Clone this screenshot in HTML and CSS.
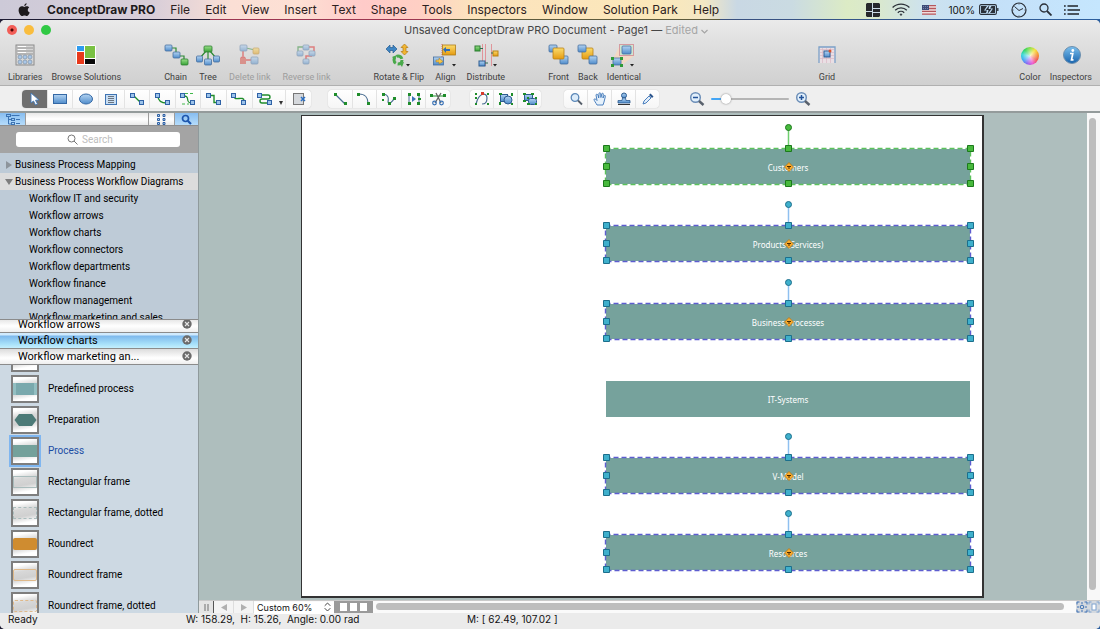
FILE: index.html
```html
<!DOCTYPE html>
<html lang="en">
<head>
<meta charset="utf-8">
<title>Unsaved ConceptDraw PRO Document - Page1</title>
<link rel="stylesheet" href="styles.css">
</head>
<body>
<svg class="defs" aria-hidden="true">
  <defs>
    <linearGradient id="g-blue" x1="0" y1="0" x2="0" y2="1"><stop offset="0" stop-color="#b4d4f2"/><stop offset="1" stop-color="#4f8ccb"/></linearGradient>
    <linearGradient id="g-green" x1="0" y1="0" x2="0" y2="1"><stop offset="0" stop-color="#9be08a"/><stop offset="1" stop-color="#37a136"/></linearGradient>
    <linearGradient id="g-gold" x1="0" y1="0" x2="0" y2="1"><stop offset="0" stop-color="#fbdc6c"/><stop offset="1" stop-color="#e59a10"/></linearGradient>
    <linearGradient id="g-info" x1="0" y1="0" x2="0" y2="1"><stop offset="0" stop-color="#7cc0ee"/><stop offset="1" stop-color="#1763ad"/></linearGradient>
    <symbol id="node" viewBox="0 0 5 5"><rect x=".5" y=".5" width="4" height="4" fill="#9cc3ea" stroke="#2f62a6"/></symbol>
    <symbol id="dot" viewBox="0 0 3 3"><rect width="3" height="3" fill="#1f8d2b"/></symbol>
    <symbol id="selection" viewBox="0 0 372 66">
      <rect x="3.500" y="25.500" width="365" height="36" fill="none" stroke="#fff"/>
      <rect x="3.500" y="25.500" width="365" height="36" fill="none" stroke="var(--line)" stroke-width="1.400" stroke-dasharray="5 3"/>
      <path d="M186.500 6v19" stroke="var(--stem)" stroke-width="1.500"/>
      <g fill="var(--handle)" stroke="var(--edge)">
        <circle cx="186.500" cy="4.500" r="3"/>
        <path d="M1.500 22.500h6v6h-6zM183.500 22.500h6v6h-6zM365.500 22.500h6v6h-6zM1.500 40.500h6v6h-6zM365.500 40.500h6v6h-6zM1.500 57.500h6v6h-6zM183.500 57.500h6v6h-6zM365.500 57.500h6v6h-6z"/>
      </g>
      <path d="M187 39.500l4.500 4.500-4.500 4.500-4.500-4.500z" fill="#f9ab2c" stroke="#b06d10" stroke-width=".7"/>
      <path d="M185 43.500h4M187 43.500v2.500" stroke="#4a2b00" stroke-width="1"/>
    </symbol>
    <symbol id="close" viewBox="0 0 10 10"><circle cx="5" cy="5" r="4.700" fill="#6b6b6b"/><path d="M3 3l4 4M7 3l-4 4" stroke="#e6e6e6" stroke-width="1.100"/></symbol>
  </defs>
</svg>

<header class="menubar">
  <nav class="menus">
    <button class="menu" aria-label="Apple"><svg width="12" height="14" viewBox="0 0 12 14"><path d="M8.600.3c.1 1.200-.9 2.600-2.300 2.800C6.100 1.800 7.300.5 8.600.3zM6.300 4c.6 0 1.300-.7 2.500-.7 1 0 1.900.5 2.400 1.300-2.100 1.300-1.700 4.200.5 5-.5 1.400-1.600 3.500-2.900 3.500-.9 0-1.200-.6-2.300-.6s-1.500.6-2.300.6C2.600 13.100.6 9.900.6 7.300c0-2.700 1.700-4 3.300-4C5 3.300 5.800 4 6.300 4z" fill="#1d1a1c"/></svg></button>
    <button class="menu app">ConceptDraw PRO</button>
    <button class="menu">File</button>
    <button class="menu">Edit</button>
    <button class="menu">View</button>
    <button class="menu">Insert</button>
    <button class="menu">Text</button>
    <button class="menu">Shape</button>
    <button class="menu">Tools</button>
    <button class="menu">Inspectors</button>
    <button class="menu">Window</button>
    <button class="menu">Solution Park</button>
    <button class="menu">Help</button>
  </nav>
  <div class="tray">
    <svg width="14" height="14" viewBox="0 0 14 14" fill="#26282c"><path d="M1 0h5v8H0V1zM0 9h6v5H1l-1-1zM7 0h6l1 1v4H7zM7 6h7v3H7zM7 10h7v3l-1 1H7z"/><path d="M6.500 0v14M0 8.500h6M7 5.500h7M7 9.500h7" stroke="#cbdbe6"/></svg>
    <svg width="18" height="13" viewBox="0 0 18 13" fill="none" stroke="#2b3038" stroke-width="1.300"><path d="M.6 4.500a12 12 0 0 1 16.800 0M3.200 7.200a8.300 8.300 0 0 1 11.600 0M5.800 9.700a4.600 4.600 0 0 1 6.400 0"/><circle cx="9" cy="11.600" r=".8" fill="#2b3038" stroke-width=".6"/></svg>
    <svg width="14" height="10" viewBox="0 0 14 10"><path fill="#f0dfdf" d="M0 0h14v10H0z"/><path d="M0 .7h14M0 3.500h14M0 6.300h14M0 9.200h14" stroke="#b4565c" stroke-width="1.300"/><path fill="#3c4a78" d="M0 0h7v5H0z"/><path d="M1 1.500h5M1 3.500h5" stroke="#9fa8c8" stroke-width=".6" stroke-dasharray="1 1"/></svg>
    <span class="battery">100%<svg width="20" height="11" viewBox="0 0 20 11"><rect x=".6" y=".6" width="16.800" height="9.800" rx="1.500" fill="none" stroke="#2b3038" stroke-width="1.100"/><path d="M2 2h6L5 6.500h3L7 9H2zM16 9h-5l3-4.500h-3L12.500 2H16z" fill="#2b3038"/><path d="M10.500 1L6.500 6h3L8.500 10l4-5h-3z" fill="#2b3038"/><path d="M18.800 4v3" stroke="#2b3038" stroke-width="1.300"/></svg></span>
    <svg width="16" height="16" viewBox="0 0 16 16" fill="none" stroke="#2b3038"><circle cx="8" cy="8" r="7" stroke-width="1.200"/><path d="M3.500 4.500L8 8.500l4-2"/><path d="M8 1.500v1M8 13.500v1M1.500 8h1M13.500 8h1" stroke-width=".8"/></svg>
    <svg width="13" height="13" viewBox="0 0 13 13" fill="none" stroke="#2b3038" stroke-width="1.300"><circle cx="5" cy="5" r="4"/><path d="M8 8l4.500 4.500" stroke-width="1.800"/></svg>
    <svg width="16" height="10" viewBox="0 0 16 10" stroke="#20242a" stroke-width="1.700"><path d="M3.500 1H14M3.500 5H16M3.500 9H15M0 1h1.700M0 5h1.700M0 9h1.700"/></svg>
  </div>
</header>

<div class="window">
  <div class="titlebar">
    <div class="lights">
      <button class="light red" aria-label="Close"></button>
      <button class="light yellow" aria-label="Minimize"></button>
      <button class="light green" aria-label="Zoom"></button>
    </div>
    <h1 class="title">Unsaved ConceptDraw PRO Document - Page1 — <span class="edited">Edited <svg width="7" height="5" viewBox="0 0 7 5"><path d="M.5 1l3 3 3-3" fill="none" stroke="#a5a5a5" stroke-width="1.200"/></svg></span></h1>
  </div>

  <div class="toolbar">
    <div class="tb-group">
      <button class="tb"><svg viewBox="0 0 26 24"><rect x="4" y="2" width="18" height="20" fill="#d6d6d6" stroke="#8c8c8c"/><path d="M5 5h16M5 8h16M5 11h16" stroke="#929292"/><path d="M6 3.500h8M6 6.500h8M6 9.500h8" stroke="#fff"/><g fill="#a9c7e8" stroke="#8193a6" stroke-width=".7"><circle cx="8" cy="14" r="2"/><circle cx="13" cy="14" r="2"/><circle cx="18" cy="14" r="2"/><circle cx="8" cy="19" r="2"/><circle cx="13" cy="19" r="2"/><circle cx="18" cy="19" r="2"/></g></svg>Libraries</button>
      <button class="tb"><svg viewBox="0 0 26 24"><rect x="3" y="2" width="20" height="20" rx="2" fill="#fff"/><path fill="#2f9bee" d="M4 3h7v5H4z"/><path fill="#e8391b" d="M4 9h7v12H4z"/><path fill="#79c143" d="M12 3h10v12H12z"/><path fill="#0a0a0a" d="M12 16h10v5H12z"/></svg>Browse Solutions</button>
    </div>
    <div class="tb-group wide">
      <button class="tb"><svg viewBox="0 0 26 24"><path d="M8 5h5v5M16 13h5v5" fill="none" stroke="#2d8a35" stroke-width="1.200"/><g stroke="#466f9e" stroke-width=".8" fill="url(#g-blue)"><rect x="2" y="2" width="7" height="6" rx="1"/><rect x="10" y="9" width="7" height="6" rx="1"/></g><rect x="18" y="16" width="7" height="6" rx="1" fill="url(#g-green)" stroke="#2e7f32" stroke-width=".8"/></svg>Chain</button>
      <button class="tb"><svg viewBox="0 0 26 24"><path d="M13 8v8M11 8l-6 7M15 8l6 7" fill="none" stroke="#2d8a35" stroke-width="1.200"/><rect x="9" y="3" width="8" height="6" rx="1" fill="url(#g-green)" stroke="#2e7f32" stroke-width=".8"/><g stroke="#466f9e" stroke-width=".8" fill="url(#g-blue)"><rect x="1.500" y="13" width="6" height="6" rx="1"/><rect x="9.500" y="16" width="7" height="6" rx="1"/><rect x="18.500" y="13" width="6" height="6" rx="1"/></g></svg>Tree</button>
      <button class="tb" disabled><svg viewBox="0 0 26 24"><path d="M9 5l9 2" stroke="#2d8a35" stroke-width="1.200"/><path d="M6 8v9h12M4 14l4 6M8 14l-4 6" stroke="#d22" fill="none" stroke-width="1.500"/><g stroke="#466f9e" stroke-width=".8" fill="url(#g-blue)"><rect x="3" y="2" width="7" height="6" rx="1"/><rect x="14" y="14" width="7" height="7" rx="1"/></g><rect x="16" y="5" width="6" height="6" rx="1" fill="url(#g-gold)" stroke="#b98214" stroke-width=".8"/><path fill="#d94c40" d="M3 15h6v6H3z"/></svg>Delete link</button>
      <button class="tb" disabled><svg viewBox="0 0 26 24"><path d="M5 10V4h7" stroke="#2d8a35" fill="none" stroke-width="1.300"/><path d="M16 4h5v5M19 13h-6v4" stroke="#d22" fill="none" stroke-width="1.500"/><g stroke="#466f9e" stroke-width=".8" fill="url(#g-blue)"><rect x="10" y="2" width="6" height="5" rx="1"/><rect x="4" y="8" width="6" height="5" rx="1"/><rect x="16" y="8" width="6" height="5" rx="1"/><rect x="10" y="16" width="6" height="5" rx="1"/></g></svg>Reverse link</button>
    </div>
    <div class="tb-group mid">
      <button class="tb"><svg viewBox="0 0 26 24"><path d="M0 6l4-4v2.500h3V2l4 4-4 4V7.500H4V10z" fill="#3f86c4" stroke="#255c92" stroke-width=".7"/><path d="M18.500 1L22 4.500h-2v4h2L18.500 12 15 8.500h2v-4h-2z" fill="#f2b632" stroke="#b17b13" stroke-width=".7"/><circle cx="12" cy="17" r="4" fill="none" stroke="#49a94a" stroke-width="3" stroke-dasharray="6.500 1.900"/><path d="M6 14l5-2-2 5zM18 19l-2 5-3-4z" fill="#49a94a"/><path d="M20 21h4l-2 2.500z" fill="#222"/></svg>Rotate &amp; Flip</button>
      <button class="tb"><svg viewBox="0 0 26 24"><path d="M10 1v22" stroke="#e0666c" stroke-dasharray="1 1"/><rect x="10.500" y="2" width="13" height="10" fill="url(#g-gold)" stroke="#ae7d1a" stroke-width=".8"/><rect x="1.500" y="14" width="10" height="8" fill="url(#g-blue)" stroke="#466f9e" stroke-width=".8"/><path d="M18 8h-4v2l-3-3.500L14 4v2h4z" fill="#2f6db5"/><path d="M4 17h3v-2l4 3.500L7 21v-2H4z" fill="#f6c64a" stroke="#a9781c" stroke-width=".5"/><path d="M20 21h4l-2 2.500z" fill="#222"/></svg>Align</button>
      <button class="tb"><svg viewBox="0 0 26 24"><path d="M9.500 1v22M12.500 1v22M18.500 1v22" stroke="#e0959a"/><rect x="2" y="3" width="5" height="5" fill="url(#g-green)" stroke="#2e7f32"/><rect x="6" y="18" width="6" height="5" fill="url(#g-blue)" stroke="#2d5c91"/><rect x="20" y="8" width="5" height="5" fill="url(#g-gold)" stroke="#b98214"/><path d="M7 5.500h3M12 20h3M18 10h2" stroke="#2e6c50"/><path d="M20 21h4l-2 2.500z" fill="#222"/></svg>Distribute</button>
    </div>
    <div class="tb-group">
      <button class="tb"><svg viewBox="0 0 26 24"><g stroke="#466f9e" stroke-width=".8" fill="url(#g-blue)"><rect x="3" y="2" width="8" height="7" rx="1"/><rect x="14" y="13" width="8" height="8" rx="1"/></g><rect x="7" y="5" width="11" height="11" rx="1" fill="url(#g-gold)" stroke="#b98214" stroke-width=".8"/></svg>Front</button>
      <button class="tb"><svg viewBox="0 0 26 24"><rect x="7" y="5" width="11" height="11" rx="1" fill="url(#g-gold)" stroke="#b98214" stroke-width=".8"/><g stroke="#466f9e" stroke-width=".8" fill="url(#g-blue)"><rect x="3" y="2" width="8" height="7" rx="1"/><rect x="14" y="13" width="8" height="8" rx="1"/></g></svg>Back</button>
      <button class="tb"><svg viewBox="0 0 26 24"><path d="M9 2L2 16l9 6 13-10z" fill="#f3d9c4"/><rect x="8.500" y="1.500" width="14" height="11" fill="#cfe6d2" stroke="#d59aa0"/><rect x="11" y="3" width="9" height="8" rx="1" fill="url(#g-blue)" stroke="#466f9e" stroke-width=".8"/><rect x="2" y="15" width="8" height="7" rx="1" fill="url(#g-blue)" stroke="#466f9e" stroke-width=".8"/><path d="M0 14h3v3H0zM9 14h3v3H9zM0 21h3v3H0zM9 21h3v3H9z" fill="#2f9a38"/><path d="M19 21h4l-2 2.500z" fill="#222"/></svg>Identical</button>
    </div>
    <div class="tb-group view">
      <button class="tb"><svg viewBox="0 0 26 24"><path d="M5 20V4h16v16" fill="#e9dfe4" stroke="#7ba0c8" stroke-width="1.300"/><path d="M6 6.500h14M6 9.500h14M6 12.500h14M6 15.500h14M8.500 5v15M12.500 5v15M16.500 5v15" stroke="#dbb9c4" stroke-width=".7"/><rect x="10" y="8" width="6" height="6" fill="url(#g-blue)" stroke="#315f95"/><circle cx="16" cy="8" r="1.500" fill="#d9532c"/></svg>Grid</button>
    </div>
    <div class="tb-group end">
      <button class="tb"><span class="wheel"></span>Color</button>
      <button class="tb"><svg viewBox="0 0 26 24"><circle cx="14" cy="12" r="8.500" fill="url(#g-info)" stroke="#6d8fae"/><circle cx="14.800" cy="7.500" r="1.400" fill="#fff"/><path d="M12 10.500h2.800l-1.300 6.300h2" fill="none" stroke="#fff" stroke-width="1.700"/></svg>Inspectors</button>
    </div>
  </div>

  <div class="tools">
    <div class="seg connectors">
      <button class="tool on" aria-label="Select"><svg viewBox="0 0 16 14"><path d="M5 1v10l2.500-2 2 4 2-1-2-3.800L13 8z" fill="#fff" stroke="#3e77b8" stroke-width=".9"/></svg></button>
      <button class="tool" aria-label="Rectangle"><svg viewBox="0 0 16 14"><rect x="1.500" y="2.500" width="13" height="9" fill="url(#g-blue)" stroke="#3468a5"/></svg></button>
      <button class="tool" aria-label="Ellipse"><svg viewBox="0 0 16 14"><ellipse cx="8" cy="7" rx="6.500" ry="5" fill="url(#g-blue)" stroke="#3468a5"/></svg></button>
      <button class="tool" aria-label="Text box"><svg viewBox="0 0 16 14"><rect x="2.500" y="2.500" width="11" height="10" fill="#c8def3" stroke="#3f74b3"/><path d="M5 4.500h6M5 6.500h6M5 8.500h6M5 10.500h6" stroke="#6a7480"/></svg></button>
      <button class="tool" aria-label="Straight connector"><svg viewBox="0 0 16 14"><path d="M4 3l8 8" stroke="#1f8d2b" stroke-width="1.300"/><use href="#node" x="1" y="1" width="5" height="5"/><use href="#node" x="10" y="8" width="5" height="5"/></svg></button>
      <button class="tool" aria-label="Arc connector"><svg viewBox="0 0 16 14"><path d="M3 4c0 5 4 7 9 7" fill="none" stroke="#1f8d2b" stroke-width="1.300"/><use href="#node" x="0" y="1" width="5" height="5"/><use href="#node" x="10" y="8" width="5" height="5"/></svg></button>
      <button class="tool" aria-label="Bezier connector"><svg viewBox="0 0 16 14"><path d="M4 4c7 0 0 7 8 7" fill="none" stroke="#1f8d2b" stroke-width="1.300"/><path d="M5 1.500h8M2 12h7" stroke="#40b84a" stroke-dasharray="3 2"/><use href="#node" x="0" y="1" width="5" height="5"/><use href="#node" x="10" y="8" width="5" height="5"/></svg></button>
      <button class="tool" aria-label="Smart connector"><svg viewBox="0 0 16 14"><path d="M4 3.500h4v7h4" fill="none" stroke="#1f8d2b" stroke-width="1.400"/><use href="#node" x="0" y="1" width="5" height="5"/><use href="#node" x="10" y="8" width="5" height="5"/></svg></button>
      <button class="tool" aria-label="Curve connector"><svg viewBox="0 0 16 14"><path d="M3 4c0 6 10-1 10 5" fill="none" stroke="#1f8d2b" stroke-width="1.400"/><use href="#node" x="0" y="1" width="5" height="5"/><use href="#node" x="10" y="8" width="5" height="5"/></svg></button>
      <button class="tool" aria-label="Round connector"><svg viewBox="0 0 16 14"><path d="M4 3h7q2 0 2 2t-2 2H5q-2 0-2 2t2 2h6" fill="none" stroke="#1f8d2b" stroke-width="1.400"/><use href="#node" x="0" y="1" width="5" height="5"/><use href="#node" x="10" y="8" width="5" height="5"/></svg></button>
      <button class="tool drop" aria-label="More connectors"><svg viewBox="0 0 6 14"><path d="M1 9h4l-2 4z" fill="#333"/></svg></button>
      <button class="tool" aria-label="Remove shape"><svg viewBox="0 0 16 14"><rect x="2.500" y="1.500" width="10" height="11" fill="#d5d8dc" stroke="#777"/><path d="M10 5l4 4M14 5l-4 4" stroke="#2b6fc2" stroke-width="1.500"/></svg></button>
    </div>
    <div class="seg lines">
      <button class="tool" aria-label="Line"><svg viewBox="0 0 16 14"><path d="M3 2l10 10" stroke="#4b6f92" stroke-width="1.200"/><use href="#dot" x="2" y="1" width="3" height="3"/><use href="#dot" x="12" y="10" width="3" height="3"/></svg></button>
      <button class="tool" aria-label="Arc"><svg viewBox="0 0 16 14"><path d="M3 2c6 0 9 4 9 9" fill="none" stroke="#4b6f92" stroke-width="1.200"/><use href="#dot" x="1" y="1" width="3" height="3"/><use href="#dot" x="11" y="10" width="3" height="3"/></svg></button>
      <button class="tool" aria-label="Bezier"><svg viewBox="0 0 16 14"><path d="M3 2c8 2 2 9 5 9s3-2 5-4" fill="none" stroke="#4b6f92" stroke-width="1.200"/><use href="#dot" x="1" y="1" width="3" height="3"/><use href="#dot" x="7" y="10" width="3" height="3"/><use href="#dot" x="12" y="5" width="3" height="3"/><use href="#dot" x="1" y="7" width="2" height="2"/></svg></button>
      <button class="tool" aria-label="Break point"><svg viewBox="0 0 16 14"><path d="M3 2v10M13 2v10" stroke="#4b6f92"/><path d="M6 4l4 3-4 3z" fill="#3b74b8"/><path d="M2 1h3v3H2zM11 1h3v3h-3zM2 10h3v3H2zM11 10h3v3h-3zM12 6h3v2h-3z" fill="#1f8d2b"/></svg></button>
      <button class="tool" aria-label="Cut"><svg viewBox="0 0 16 14"><path d="M1 4h14" stroke="#1f8d2b"/><path d="M5 11l6-10M11 11L6 1" stroke="#666" stroke-width="1.300"/><circle cx="4.500" cy="11" r="1.800" fill="none" stroke="#356fb4" stroke-width="1.200"/><circle cx="11.500" cy="11" r="1.800" fill="none" stroke="#356fb4" stroke-width="1.200"/><path d="M0 2h3v3H0zM13 2h3v3h-3z" fill="#1f8d2b"/></svg></button>
    </div>
    <div class="seg groups">
      <button class="tool" aria-label="Edit points"><svg viewBox="0 0 16 14"><path d="M2 12C5 0 13 0 13 6s-3 6-5 6" fill="none" stroke="#4b6f92" stroke-width="1.200"/><path d="M1 1h2v2H1zM13 1h2v2h-2zM1 11h2v2H1zM13 11h2v2h-2zM1 5h2v2H1z" fill="#1f8d2b"/><path d="M7 0h3v3H7z" fill="#d83a2b"/></svg></button>
      <button class="tool" aria-label="Group"><svg viewBox="0 0 16 14"><rect x="2.500" y="2.500" width="7" height="7" fill="url(#g-blue)" stroke="#2d5c91"/><circle cx="10" cy="8" r="4" fill="url(#g-blue)" stroke="#2d5c91"/><path d="M1 1h3v2H1zM13 1h2v3h-2zM1 10h2v3H1zM13 11h2v2h-2z" fill="#1f8d2b"/></svg></button>
      <button class="tool" aria-label="Ungroup"><svg viewBox="0 0 16 14"><rect x="2.500" y="2.500" width="8" height="6" fill="url(#g-blue)" stroke="#2d5c91"/><rect x="6.500" y="6.500" width="8" height="6" rx="2" fill="url(#g-blue)" stroke="#2d5c91"/><path d="M1 1h3v2H1zM9 1h3v2H9zM1 8h3v2H1zM5 11h3v2H5zM13 11h2v2h-2zM13 5h2v2h-2zM5 5h2v2H5z" fill="#1f8d2b"/></svg></button>
    </div>
    <div class="seg view-tools">
      <button class="tool" aria-label="Zoom tool"><svg viewBox="0 0 16 14"><circle cx="7" cy="5.500" r="3.800" fill="#dcecfa" stroke="#5c88b8" stroke-width="1.300"/><path d="M10 8.500l4 4" stroke="#555e6a" stroke-width="1.800"/></svg></button>
      <button class="tool" aria-label="Hand"><svg viewBox="0 0 16 14"><path d="M5 13C4 11 2 8.500 2 7.500S4 7 5 8.500L4 3c0-1 1.500-1 2 0l.7 3L7 1.500c0-1 1.500-1 1.700 0l.2 4 .9-3.600c.3-1 1.600-.8 1.500.2L11 6l1-2c.5-1 1.700-.6 1.400.4L12 10l-1 3z" fill="#e6f1fb" stroke="#3b74b8" stroke-width=".9"/></svg></button>
      <button class="tool" aria-label="Stamp"><svg viewBox="0 0 16 14"><circle cx="8" cy="3.500" r="2.500" fill="url(#g-blue)" stroke="#2d5c91"/><path d="M6.500 6h3l.5 2.500h4v2.500H2V8.500h4z" fill="url(#g-blue)" stroke="#2d5c91" stroke-width=".8"/><path d="M2 12.500h12" stroke="#333"/></svg></button>
      <button class="tool" aria-label="Eyedropper"><svg viewBox="0 0 16 14"><path d="M3 12l1-3 5-5 2 2-5 5z" fill="#e2eefa" stroke="#3b74b8" stroke-width=".9"/><path d="M9 3l1.500-1.500L13.500 4.500 12 6z" fill="#29528a"/></svg></button>
    </div>
    <div class="zoom">
      <button class="zoom-btn" aria-label="Zoom out"><svg viewBox="0 0 16 16"><circle cx="6.500" cy="6.500" r="4.800" fill="#e1effb" stroke="#6d8fb8" stroke-width="1.500"/><path d="M4 6.500h5" stroke="#24549a" stroke-width="1.500"/><path d="M10 10l4.500 4" stroke="#59616c" stroke-width="2.400"/></svg></button>
      <input class="slider" type="range" min="0" max="100" value="14" aria-label="Zoom">
      <button class="zoom-btn" aria-label="Zoom in"><svg viewBox="0 0 16 16"><circle cx="6.500" cy="6.500" r="4.800" fill="#e1effb" stroke="#6d8fb8" stroke-width="1.500"/><path d="M4 6.500h5M6.500 4v5" stroke="#24549a" stroke-width="1.500"/><path d="M10 10l4.500 4" stroke="#59616c" stroke-width="2.400"/></svg></button>
    </div>
  </div>

  <main class="body">
    <aside class="sidebar">
      <div class="side-tabs">
        <button class="side-tab on" aria-label="Library tree"><svg width="14" height="11" viewBox="0 0 14 11" fill="none" stroke="#3c74b4"><rect x=".5" y=".5" width="4" height="2"/><path d="M5.500 1.500h8M2.500 3v7h3M2.500 5.500h3M10 5.500h4M10 9.500h4"/><rect x="5.500" y="4.500" width="3" height="2"/><rect x="5.500" y="8.500" width="3" height="2"/></svg></button>
        <span class="side-fill"></span>
        <button class="side-tab grid-tab" aria-label="Grid view"><svg width="9" height="11" viewBox="0 0 9 11" fill="#b9d3ef" stroke="#2c5fa3"><path d="M.5.500h2v2h-2zM6 .5h2v2H6zM.5 4.500h2v2h-2zM6 4.500h2v2H6zM.5 8.500h2v2h-2zM6 8.500h2v2H6z"/></svg></button>
        <button class="side-tab on" aria-label="Search view"><svg width="11" height="11" viewBox="0 0 11 11" fill="none" stroke="#1d56ae"><circle cx="4.500" cy="4.500" r="3" stroke-width="1.700"/><path d="M7 7l3 3" stroke-width="2.200"/></svg></button>
      </div>
      <div class="search-panel">
        <label class="search"><svg width="11" height="11" viewBox="0 0 11 11" fill="none" stroke="#777"><circle cx="4.500" cy="4.500" r="3.500"/><path d="M7 7l3.500 3.500"/></svg><input type="text" placeholder="Search" aria-label="Search libraries"></label>
      </div>
      <ul class="tree">
        <li><button class="branch"><svg width="8" height="8" viewBox="0 0 8 8"><path d="M1 0l6 4-6 4z" fill="#8d949b"/></svg>Business Process Mapping</button></li>
        <li><button class="branch open"><svg width="8" height="8" viewBox="0 0 8 8"><path d="M0 1h8L4 7z" fill="#7d7d7d"/></svg>Business Process Workflow Diagrams</button></li>
        <li><button class="leaf">Workflow IT and security</button></li>
        <li><button class="leaf">Workflow arrows</button></li>
        <li><button class="leaf">Workflow charts</button></li>
        <li><button class="leaf">Workflow connectors</button></li>
        <li><button class="leaf">Workflow departments</button></li>
        <li><button class="leaf">Workflow finance</button></li>
        <li><button class="leaf">Workflow management</button></li>
        <li><button class="leaf">Workflow marketing and sales</button></li>
      </ul>
      <ul class="open-libs">
        <li class="lib">Workflow arrows<button class="close" aria-label="Close Workflow arrows"><svg><use href="#close"/></svg></button></li>
        <li class="lib on">Workflow charts<button class="close" aria-label="Close Workflow charts"><svg><use href="#close"/></svg></button></li>
        <li class="lib">Workflow marketing an...<button class="close" aria-label="Close Workflow marketing"><svg><use href="#close"/></svg></button></li>
      </ul>
      <div class="shape-panel">
        <ul class="shapes">
          <li><button class="item" aria-label="Previous shape"><span class="thumb"><i class="pic"></i></span></button></li>
          <li><button class="item"><span class="thumb"><i class="pic predefined"></i></span>Predefined process</button></li>
          <li><button class="item"><span class="thumb"><svg width="23" height="12" viewBox="0 0 23 12"><path d="M5 0h13l4.500 6L18 12H5L.5 6z" fill="#4c7a77"/></svg></span>Preparation</button></li>
          <li><button class="item on"><span class="thumb"><i class="pic process"></i></span>Process</button></li>
          <li><button class="item"><span class="thumb"><i class="pic frame"></i></span>Rectangular frame</button></li>
          <li><button class="item"><span class="thumb"><i class="pic frame dotted"></i></span>Rectangular frame, dotted</button></li>
          <li><button class="item"><span class="thumb"><i class="pic round"></i></span>Roundrect</button></li>
          <li><button class="item"><span class="thumb"><i class="pic frame orange"></i></span>Roundrect frame</button></li>
          <li><button class="item"><span class="thumb"><i class="pic frame orange dotted"></i></span>Roundrect frame, dotted</button></li>
        </ul>
      </div>
    </aside>

    <section class="editor">
      <div class="work">
        <div class="canvas">
          <div class="page">
            <div class="shape s1 primary">Customers<svg class="sel"><use href="#selection"/></svg></div>
            <div class="shape s2">Products (Services)<svg class="sel"><use href="#selection"/></svg></div>
            <div class="shape s3">Business Processes<svg class="sel"><use href="#selection"/></svg></div>
            <div class="shape s4">IT-Systems</div>
            <div class="shape s5">V-Model<svg class="sel"><use href="#selection"/></svg></div>
            <div class="shape s6">Resources<svg class="sel"><use href="#selection"/></svg></div>
          </div>
        </div>
        <div class="vscroll"><span class="bar"></span></div>
      </div>
      <div class="pagebar">
        <button class="pb split" aria-label="Split"><svg width="5" height="7" viewBox="0 0 5 7"><path d="M1 0v7M4 0v7" stroke="#8a8a8a" stroke-width="1.300"/></svg></button>
        <button class="pb nav" aria-label="Previous page"><svg width="6" height="7" viewBox="0 0 6 7"><path d="M6 0v7L0 3.500z" fill="#b0b0b0"/></svg></button>
        <button class="pb nav" aria-label="Next page"><svg width="6" height="7" viewBox="0 0 6 7"><path d="M0 0v7l6-3.500z" fill="#b0b0b0"/></svg></button>
        <div class="scale">
          <select aria-label="Page scale"><option>Custom 60%</option></select>
          <svg class="updown" width="7" height="10" viewBox="0 0 7 10" fill="none" stroke="#444"><path d="M.7 3.800L3.500 1l2.800 2.800M.7 6.200L3.500 9l2.800-2.800"/></svg>
        </div>
        <button class="pb pages" aria-label="Pages"><i></i><i></i><i></i></button>
        <div class="hscroll"><span class="bar"></span></div>
        <button class="pb fit" aria-label="Fit all"><svg width="12" height="12" viewBox="0 0 12 12" fill="none" stroke="#3a6fb4"><circle cx="6" cy="6" r="1.800"/><path d="M1 3.500V1h2.500M8.500 1H11v2.500M11 8.500V11H8.500M3.500 11H1V8.500M6 1v2M6 9v2M1 6h2M9 6h2"/></svg></button>
        <button class="pb fit" aria-label="Fit page"><svg width="12" height="12" viewBox="0 0 12 12" fill="none" stroke="#7fa3cf"><rect x="4" y="3" width="4" height="6" fill="#fff"/><path d="M1 3.500V1h2.500M8.500 1H11v2.500M11 8.500V11H8.500M3.500 11H1V8.500"/></svg></button>
      </div>
    </section>
  </main>

  <footer class="status">
    <span class="ready">Ready</span>
    <span class="dims">W: 158.29,&nbsp; H: 15.26,&nbsp; Angle: 0.00 rad</span>
    <span>M: [ 62.49, 107.02 ]</span>
  </footer>
</div>
</body>
</html>
```
FILE: styles.css
```css
* { box-sizing: border-box; }
html, body { height: 100%; }
body {
  margin: 0;
  display: flex;
  flex-direction: column;
  overflow: hidden;
  background: linear-gradient(90deg, #1d1b33 0 210px, #9c3550 210px 440px, #5c5a3c 440px 720px, #39507e 720px, #2c5f9e);
  font-family: Inter, "Liberation Sans", sans-serif;
  font-size: 10px;
  color: #111;
}
button, input, select { font: inherit; color: inherit; }
button { border: 0; background: none; padding: 0; margin: 0; }
ul { list-style: none; margin: 0; padding: 0; }
svg { display: block; flex: none; }
.defs { position: absolute; width: 0; height: 0; }

/* System menu bar */
.menubar {
  height: 19px;
  flex: none;
  display: flex;
  justify-content: space-between;
  align-items: center;
  padding: 0 20px 0 18px;
  background: linear-gradient(90deg, #cdcad8 0%, #d8ced9 14%, #fbdfd5 21%, #fde0d4 27%, #ffcbc9 33%, #ffcfc4 38%, #fce3bd 43%, #fbe8ba 60%, #f3e7c4 64%, #c9d8e4 67%, #cadbe2 72%, #dcebc5 77%, #d9e8cf 80%, #cde2ee 84%, #c4e0f8 90%, #c5e6fe 100%);
  font-size: 12px;
}
.menus { display: flex; align-items: center; gap: 15px; }
.menu { white-space: nowrap; color: #2b2020; }
.app { font-weight: 700; color: #1d1a1c; margin-left: 2px; }
.tray { display: flex; align-items: center; gap: 12px; font-size: 10px; }
.battery { display: flex; align-items: center; gap: 4px; }

/* Window */
.window {
  flex: 1;
  min-height: 0;
  margin-top: 1px;
  display: flex;
  flex-direction: column;
  border-radius: 5px;
  overflow: hidden;
  background: #ebebeb;
}
.titlebar {
  flex: none;
  height: 20px;
  display: flex;
  align-items: center;
  padding: 0 45px 0 7px;
  background: linear-gradient(#ebebeb, #e1e1e1);
}
.lights { width: 50px; display: flex; gap: 7px; }
.light { width: 10px; height: 10px; border-radius: 50%; }
.red { background: radial-gradient(#4c0502 0 1px, #f25e57 2px); }
.yellow { background: #f9bd3e; }
.green { background: #30c944; }
.title { flex: 1; margin: 0; text-align: center; font-weight: 400; font-size: 11px; color: #464646; white-space: nowrap; }
.edited { color: #a5a5a5; }
.edited svg { display: inline-block; }

.toolbar {
  flex: none;
  height: 46px;
  display: flex;
  gap: 43px;
  padding: 3px 8px 0;
  border-bottom: 1px solid #b0b0b0;
  background: linear-gradient(#e1e1e1, #d0d0d0);
  font-family: Roboto, "Liberation Sans", sans-serif;
}
.tb-group { display: flex; gap: 9px; }
.tb-group.wide { gap: 12px; }
.tb-group.mid { gap: 11px; }
.tb-group.view { margin-left: 134px; }
.tb-group.end { margin-left: auto; }
.tb {
  display: flex;
  flex-direction: column;
  align-items: center;
  gap: 4px;
  font-size: 9px;
  line-height: 12px;
  color: #404040;
  white-space: nowrap;
}
.tb svg { width: 26px; height: 24px; margin: 0 -4px; }
.tb:disabled { color: #9d9d9d; }
.tb:disabled svg { opacity: .5; }
.wheel {
  width: 18px;
  height: 18px;
  margin: 4px 0 2px;
  border-radius: 50%;
  background: radial-gradient(#fffc, #fff0 65%), conic-gradient(#8be04a, #f7e13a, #f59331, #f2564f, #ee58d2, #8f63f0, #3aa6f5, #33d6d6, #2fd45b, #8be04a);
}

.tools {
  flex: none;
  height: 27px;
  display: flex;
  align-items: center;
  padding: 0 22px;
  background: #efefef;
  border-bottom: 2px solid #949b9b;
}
.seg {
  display: flex;
  height: 18px;
  border-radius: 4px;
  background: linear-gradient(#fff, #f6f6f6);
  box-shadow: 0 0 1px #a8a8a8;
  overflow: hidden;
}
.connectors { width: 289px; }
.lines { width: 122px; margin-left: 17px; }
.groups { width: 71px; margin-left: 20px; }
.view-tools { width: 95px; margin-left: 23px; }
.tool { flex: 1; display: grid; place-items: center; border-left: 1px solid #e3e3e3; }
.tool:first-child { border-left: 0; }
.tool svg { width: 16px; height: 14px; }
.tool.on { background: #6f6f6f; }
.tool.drop { flex: 0 0 8px; border: 0; }
.tool.drop svg { width: 6px; }
.zoom { display: flex; align-items: center; gap: 6px; margin-left: 30px; }
.zoom-btn svg { width: 16px; height: 16px; }
.slider { appearance: none; width: 78px; height: 12px; margin: 0; background: none; }
.slider::-webkit-slider-runnable-track { height: 2px; border-radius: 1px; background: linear-gradient(90deg, #43a5f5 12px, #b5b5b5 12px); }
.slider::-webkit-slider-thumb { appearance: none; width: 10px; height: 10px; margin-top: -4px; border-radius: 50%; background: #fff; box-shadow: 0 0 2px #777; }

/* Sidebar */
.body { flex: 1; min-height: 0; display: flex; }
.sidebar {
  width: 199px;
  flex: none;
  display: flex;
  flex-direction: column;
  border-right: 1px solid #8f9a9c;
  background: #cdd9e3;
  font-family: Roboto, "Liberation Sans", sans-serif;
  color: #000;
}
.side-tabs { flex: none; height: 13px; display: flex; border-bottom: 1px solid #8e8e8e; background: linear-gradient(#e8e8e8, #fff 50%, #e9e9e9); }
.side-tab { width: 24px; display: grid; place-items: center; border-left: 1px solid #9c9c9c; }
.side-tab:first-child { width: 26px; border-left: 0; border-right: 1px solid #9c9c9c; }
.side-tab.grid-tab { width: 26px; }
.side-tab.on { background: linear-gradient(#87bdf0, #b5dcfb); }
.side-fill { flex: 1; }
.search-panel { flex: none; height: 27px; padding: 6px 18px 6px 16px; background: #a4a4a4; }
.search { display: flex; align-items: center; gap: 4px; height: 15px; padding-left: 51px; border-radius: 3px; background: #fff; }
.search input { width: 90px; min-width: 0; border: 0; padding: 0; background: none; outline: 0; }
.search input::placeholder { color: #bdbdbd; }
.tree { flex: none; height: 166px; padding-top: 3px; overflow: hidden; background: #becbd7; }
.branch, .leaf { display: flex; align-items: center; width: 100%; height: 17px; white-space: nowrap; }
.branch { gap: 2px; padding-left: 5px; }
.branch.open { background: #dcdcdc; }
.leaf { padding-left: 29px; }
.open-libs { flex: none; height: 46px; display: flex; flex-direction: column; justify-content: flex-end; overflow: hidden; border-top: 1px solid #8b8b8b; }
.lib {
  flex: none;
  height: 16px;
  display: flex;
  align-items: center;
  justify-content: space-between;
  padding: 0 6px 1px 18px;
  border-bottom: 1px solid #8b8b8b;
  background: linear-gradient(#dcdcdc, #fff 60%, #eee);
  font-size: 11px;
}
.lib.on { background: linear-gradient(#d0eafd 0 2px, #7db8ec 3px, #a9e2fa 75%, #c4effd); }
.close svg { width: 10px; height: 10px; }
.shape-panel { flex: 1; min-height: 0; overflow: hidden; }
.shapes { margin-top: -23px; }
.item { display: flex; align-items: center; gap: 9px; width: 100%; height: 31px; padding-left: 11px; white-space: nowrap; }
.thumb {
  width: 28px;
  height: 28px;
  display: grid;
  place-items: center;
  border: 2px solid #7e7e7e;
  background: linear-gradient(170deg, #fff 0 12%, #d8d8d8 35%, #d0d0d0 60%, #fff 85%);
}
.pic { width: 24px; height: 12px; }
.predefined { background: #7aa9ad; border: solid #93bfc2; border-width: 0 3px; }
.process { background: #74a19b; }
.frame { border: 1px solid #a9bcbc; }
.round { background: #cf8c30; border-radius: 2px; }
.orange { border-color: #dfb98a; border-radius: 2px; }
.dotted { border-style: dashed; }
.item.on { color: #1c4da3; }
.item.on .thumb { box-shadow: 0 0 0 2px #7fb6f0; }

/* Document area */
.editor { flex: 1; min-width: 0; display: flex; flex-direction: column; }
.work { flex: 1; min-height: 0; display: flex; }
.canvas { flex: 1; min-width: 0; padding: 2px 103px 2px 102px; background: #aebebd; }
.page { position: relative; height: 100%; background: #fff; border: solid #333; border-width: 1px 2px 2px 1px; }
.shape {
  --line: #5d5dd0;
  --stem: #8fc0f0;
  --handle: #3fb0cc;
  --edge: #1c6f8c;
  position: absolute;
  left: 304px;
  width: 364px;
  height: 36px;
  display: grid;
  place-items: center;
  background: #76a29c;
  color: #fff;
  font: 8px "Noto Sans", "DejaVu Sans", sans-serif;
}
.primary { --line: #5cc25c; --stem: #6fce6f; --handle: #48b93d; --edge: #1c7a1c; }
.s1 { top: 33px; }
.s2 { top: 110px; }
.s3 { top: 188px; }
.s4 { top: 265px; }
.s5 { top: 342px; }
.s6 { top: 419px; }
.sel { position: absolute; left: -4px; top: -26px; width: 372px; height: 66px; }
.vscroll { width: 13px; flex: none; padding: 5px 4px 10px 2px; background: #f8f8f8; }
.bar { display: block; width: 100%; height: 100%; border-radius: 4px; background: #bdbdbd; }
.pagebar { flex: none; height: 13px; display: flex; background: #fafafa; border-top: 1px solid #c9c9c9; }
.pb { display: grid; place-items: center; }
.split { width: 15px; background: #e4e4e4; border-right: 1px solid #555; }
.nav { width: 20px; background: #f4f4f4; border-right: 1px solid #ddd; }
.scale { position: relative; width: 80px; }
.scale select { appearance: none; width: 100%; height: 100%; padding: 0 3px; border: 0; background: #fff; font-size: 9px; line-height: 12px; }
.updown { position: absolute; right: 3px; top: 1px; pointer-events: none; }
.pages { display: flex; align-items: center; justify-content: center; gap: 3px; width: 39px; background: #9a9a9a; }
.pages i { width: 7px; height: 8px; background: #fff; }
.hscroll { flex: 1; padding: 2px 12px 3px 3px; }
.fit { width: 12px; background: #d4d9df; overflow: hidden; }

.status { flex: none; height: 16px; display: flex; align-items: center; padding: 0 8px 4px; background: #ebebeb; white-space: nowrap; }
.ready { width: 178px; }
.dims { width: 281px; }
```
